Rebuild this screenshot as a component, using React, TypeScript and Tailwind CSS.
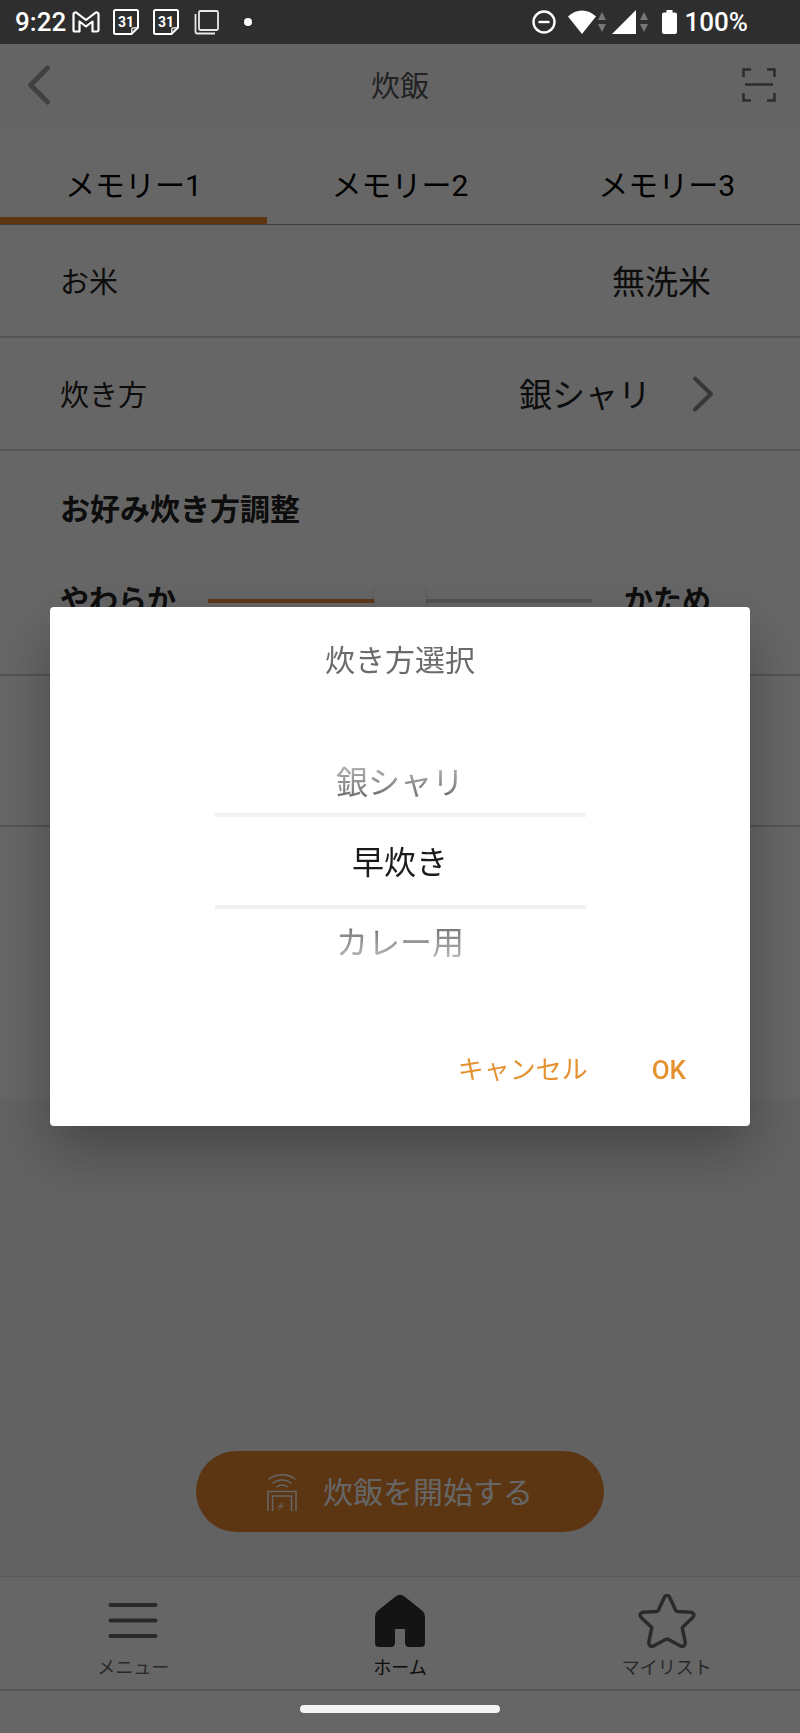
import React, { useState } from 'react';

const FONT = "font-[Roboto,'Noto_Sans_CJK_JP',sans-serif]";

const MEMORIES = ['メモリー1', 'メモリー2', 'メモリー3'];
const COURSES = ['銀シャリ', '早炊き', 'カレー用'];

function CalendarIcon() {
  return (
    <svg width="28" height="28" viewBox="0 0 28 28" fill="none" stroke="white" strokeWidth="2" strokeLinejoin="round">
      <path d="M3.500 2h21A1.500 1.500 0 0 1 26 3.500V19.500l-6.500 6.500h-16A1.500 1.500 0 0 1 2 24.500v-21A1.500 1.500 0 0 1 3.500 2z" />
      <path d="M25.500 19.800h-4a1.700 1.700 0 0 0-1.700 1.700v4" strokeWidth="1.200" />
      <text x="14" y="19" textAnchor="middle" fontFamily="Roboto" fontSize="14" fontWeight="700" fill="white" stroke="none">31</text>
    </svg>
  );
}

function DataArrows() {
  return (
    <svg width="8" height="20" viewBox="0 0 8 20" fill="#777777">
      <path d="M4 0l4 8H0zM4 20l4-8H0z" />
    </svg>
  );
}

function StatusBar() {
  return (
    <div className="relative z-20 flex h-11 shrink-0 items-center justify-between bg-[#2e2e2e] pr-[52px] pl-[15px] text-[26px] leading-[44px] font-medium text-white">
      <div className="flex items-center">
        <span>9:22</span>
        {/* Gmail */}
        <svg className="ml-1.5" width="28" height="22" viewBox="0 0 28 22" fill="none" stroke="white" strokeWidth="2.200" strokeLinejoin="round">
          <path d="M1.500 3.500a2 2 0 0 1 3.200-1.700L14 9l9.300-7.200a2 2 0 0 1 3.200 1.700V19a1.500 1.500 0 0 1-1.500 1.500h-4.500V10.500L14 15.500l-6.500-5V20.500H3A1.500 1.500 0 0 1 1.500 19z" />
        </svg>
        <div className="ml-3 flex items-center gap-3">
          <CalendarIcon />
          <CalendarIcon />
        </div>
        <svg className="ml-3.5" width="26" height="26" viewBox="0 0 26 26" fill="none" stroke="#e8e8e8" strokeWidth="1.800">
          <rect x="5" y="2" width="19" height="19" rx="1.500" />
          <path d="M1.500 5v18a1.500 1.500 0 0 0 1.500 1.500h18" />
        </svg>
        <span className="ml-6 size-2 rounded-full bg-white" />
      </div>

      <div className="flex items-center">
        <svg width="24" height="24" viewBox="0 0 24 24" fill="none" stroke="white" strokeWidth="2.400">
          <circle cx="12" cy="12" r="10.500" />
          <path d="M6.500 12h11" />
        </svg>
        <svg className="ml-3" width="28" height="24" viewBox="0 0 28 24" fill="white">
          <path d="M0 6.500C8-1.500 20-1.500 28 6.500L14 24z" />
        </svg>
        <span className="ml-0.5"><DataArrows /></span>
        <svg className="ml-1.5" width="24" height="24" viewBox="0 0 24 24" fill="white">
          <path d="M24 0v24H0z" />
        </svg>
        <span className="ml-1"><DataArrows /></span>
        <svg className="ml-3.5" width="15" height="24" viewBox="0 0 15 24" fill="white">
          <path d="M4.500 0h6v2.500h2.500a2 2 0 0 1 2 2V22a2 2 0 0 1-2 2H2a2 2 0 0 1-2-2V4.500a2 2 0 0 1 2-2h2.500z" />
        </svg>
        <span className="ml-2">100%</span>
      </div>
    </div>
  );
}

function AppHeader() {
  return (
    <header className="grid h-[82px] shrink-0 grid-cols-3 items-center bg-[#fafafa] px-6">
      <button type="button" aria-label="戻る" className="justify-self-start">
        <svg width="30" height="44" viewBox="0 0 30 44" fill="none" stroke="#a0a0a0" strokeWidth="5" strokeLinecap="round" strokeLinejoin="round">
          <path d="M23.500 5L6.500 22l17 17" />
        </svg>
      </button>
      <h1 className="pt-1 text-center text-[29px] leading-[44px] text-[#555555]">炊飯</h1>
      <button type="button" aria-label="スキャン" className="justify-self-end">
        <svg width="34" height="34" viewBox="0 0 34 34" fill="none" stroke="#6e6e6e" strokeWidth="2.500">
          <path d="M1.500 9V1.500H9M25 1.500h7.500V9M32.500 25v7.500H25M9 32.500H1.500V25M3 16.500h28" />
        </svg>
      </button>
    </header>
  );
}

interface MemoryTabsProps {
  active: number;
  onChange: (index: number) => void;
}

function MemoryTabs({ active, onChange }: MemoryTabsProps) {
  return (
    <div role="tablist" className="grid h-[99px] shrink-0 grid-cols-3 border-b border-[#999999]">
      {MEMORIES.map((label, i) => (
        <button
          key={label}
          type="button"
          role="tab"
          aria-selected={i === active}
          onClick={() => onChange(i)}
          className={`border-b-[7px] pt-7 text-[30px] leading-[44px] text-black ${i === active ? 'border-[#e68530]' : 'border-transparent'}`}
        >
          {label}
        </button>
      ))}
    </div>
  );
}

function HardnessSlider() {
  const [value, setValue] = useState(50);

  return (
    <section className="border-b-2 border-[#d0d0d0] pt-[37px] pr-[89px] pb-[51px] pl-[60px] font-bold">
      <h2 className="text-[30px]">お好み炊き方調整</h2>
      <div className="mt-[47px] flex items-center gap-8">
        <label htmlFor="hardness">やわらか</label>
        <input
          id="hardness"
          type="range"
          value={value}
          onChange={e => setValue(Number(e.target.value))}
          className="h-1 min-w-0 flex-1 appearance-none [&::-webkit-slider-thumb]:-mt-[7px] [&::-webkit-slider-thumb]:size-[52px] [&::-webkit-slider-thumb]:appearance-none [&::-webkit-slider-thumb]:rounded-full [&::-webkit-slider-thumb]:bg-white [&::-webkit-slider-thumb]:shadow-[0_2px_5px_rgba(0,0,0,0.15)]"
          style={{ background: `linear-gradient(to right, #e68f3c ${value}%, #d0d0d0 ${value}%)` }}
        />
        <span>かため</span>
      </div>
    </section>
  );
}

function BottomNav() {
  return (
    <nav className="grid h-[113px] shrink-0 grid-cols-3 border-t border-[#dddddd] bg-white pt-[17px] text-center text-[18px] leading-[26px] text-[#666666]">
      <a href="#menu" className="flex flex-col items-center gap-[7px]">
        <svg width="50" height="54" viewBox="0 0 50 54" stroke="#6a6a6a" strokeWidth="4" strokeLinecap="round">
          <path d="M2.500 11h45M2.500 26.500h45M2.500 42h45" />
        </svg>
        メニュー
      </a>
      <a href="#home" className="flex flex-col items-center gap-[7px] text-[#222222]">
        <svg width="50" height="54" viewBox="0 0 50 54" fill="#333333">
          <path d="M20.500 2.500Q25-1 29.500 2.500L47 16.500Q50 19 50 22.500V49q0 4-4 4H34q-4 0-4-4V35H20v14q0 4-4 4H4q-4 0-4-4V22.500Q0 19 3 16.500z" />
        </svg>
        ホーム
      </a>
      <a href="#mylist" className="flex flex-col items-center gap-[7px]">
        <svg width="58" height="54" viewBox="0 0 58 54" fill="none" stroke="#6a6a6a" strokeWidth="3.500" strokeLinejoin="round">
          <path d="M26.500 3Q29-.5 31.500 3L37.800 16.500Q38.200 17.300 39.200 17.400L53 18.300Q57.800 19.500 54.800 23.500L44.800 33Q44.200 33.700 44.400 34.700L47.300 48.500Q47 53.500 42.500 52L30 45.300Q29 44.800 28 45.300L15.500 52Q11 53.500 10.700 48.500L13.600 34.700Q13.800 33.700 13.200 33L3.200 23.500Q.2 19.500 5 18.300L18.800 17.400Q19.800 17.300 20.200 16.500z" />
        </svg>
        マイリスト
      </a>
    </nav>
  );
}

function CourseDialog() {
  const [selected, setSelected] = useState(1);

  return (
    <div className="fixed inset-0 z-10 flex items-center justify-center bg-black/60 px-[50px]">
      <div
        role="dialog"
        aria-modal="true"
        aria-labelledby="course-title"
        className="w-full rounded-[4px] bg-white pt-[33px] pb-9 shadow-[0_24px_56px_rgba(0,0,0,0.3)]"
      >
        <h2 id="course-title" className="text-center text-[30px] leading-[42px] text-[#6b6b6b]">炊き方選択</h2>

        <div
          role="listbox"
          aria-labelledby="course-title"
          className="mx-auto mt-[67px] flex w-[53%] flex-col text-[32px] leading-[44px]"
        >
          {COURSES.map((course, i) => (
            <button
              key={course}
              type="button"
              role="option"
              aria-selected={i === selected}
              onClick={() => setSelected(i)}
              className={
                i === selected
                  ? 'h-24 border-y-4 border-[#f1f1f1] pt-[3px] text-[#1a1a1a]'
                  : i < selected
                    ? 'h-16 mask-[linear-gradient(to_top,black_20%,transparent_130%)] pt-[3px] text-[#6b6b6b]'
                    : 'h-16 mask-[linear-gradient(to_bottom,black_20%,transparent_130%)] pt-[3px] text-[#6b6b6b]'
              }
            >
              {course}
            </button>
          ))}
        </div>

        <div className="mt-[77px] flex justify-end gap-16 pr-16 text-[26px] leading-[40px] text-[#e5912f]">
          <button type="button">キャンセル</button>
          <button type="button" className="font-medium">OK</button>
        </div>
      </div>
    </div>
  );
}

export default function App() {
  const [memory, setMemory] = useState(0);

  return (
    <div className={`flex min-h-screen flex-col bg-white ${FONT}`}>
      <StatusBar />
      <AppHeader />
      <MemoryTabs active={memory} onChange={setMemory} />

      <main className="flex flex-1 flex-col bg-[#f5f5f5]">
        <div className="bg-white text-[29px] leading-[44px] text-[#222222]">
          <div className="flex h-[113px] items-center justify-between border-b-2 border-[#d0d0d0] pt-1 pr-[89px] pl-[60px]">
            <span>お米</span>
            <span className="text-[33px]">無洗米</span>
          </div>
          <button
            type="button"
            className="flex h-[113px] w-full items-center border-b-2 border-[#d0d0d0] pr-[85px] pl-[60px]"
          >
            <span className="pt-1">炊き方</span>
            <span className="ml-auto pt-1 text-[33px]">銀シャリ</span>
            <svg className="ml-10" width="24" height="38" viewBox="0 0 24 38" fill="none" stroke="#8a8a8a" strokeWidth="4" strokeLinecap="round" strokeLinejoin="round">
              <path d="M4 3.500L20 19 4 34.500" />
            </svg>
          </button>
          <HardnessSlider />
          <div className="h-[151px] border-b-2 border-[#d0d0d0]" />
          <div className="h-[272px]" />
        </div>

        {/* 炊飯開始ボタン */}
        <div className="mt-auto flex justify-center pb-11">
          <button
            type="button"
            className="flex h-[81px] w-[51%] items-center justify-center gap-[26px] rounded-full bg-[#e68530] text-[30px] leading-[44px] text-white"
          >
            <svg width="30" height="38" viewBox="0 0 30 38" fill="none" stroke="currentColor" strokeWidth="1.500">
              <path d="M1.500 6.500C9 .2 21 .2 28.500 6.500M5.500 10.500c5.500-4.600 13.500-4.600 19 0M9.500 14c3-2.600 8-2.600 11 0" />
              <path d="M1 38V18.500h28V38M5.500 38V23h19v15" />
              <path d="M15.500 29.500l-4 4.500 4.500-1.500-4.500 4.500" strokeWidth="1" />
            </svg>
            <span className="pt-[3px]">炊飯を開始する</span>
          </button>
        </div>
      </main>

      <BottomNav />
      <div className="flex h-[44px] shrink-0 justify-center border-t-2 border-[#d8d8d8] bg-white pt-[14px]">
        <span className="relative z-20 h-2 w-1/4 rounded-full bg-[#f3f3f3]" />
      </div>

      <CourseDialog />
    </div>
  );
}
